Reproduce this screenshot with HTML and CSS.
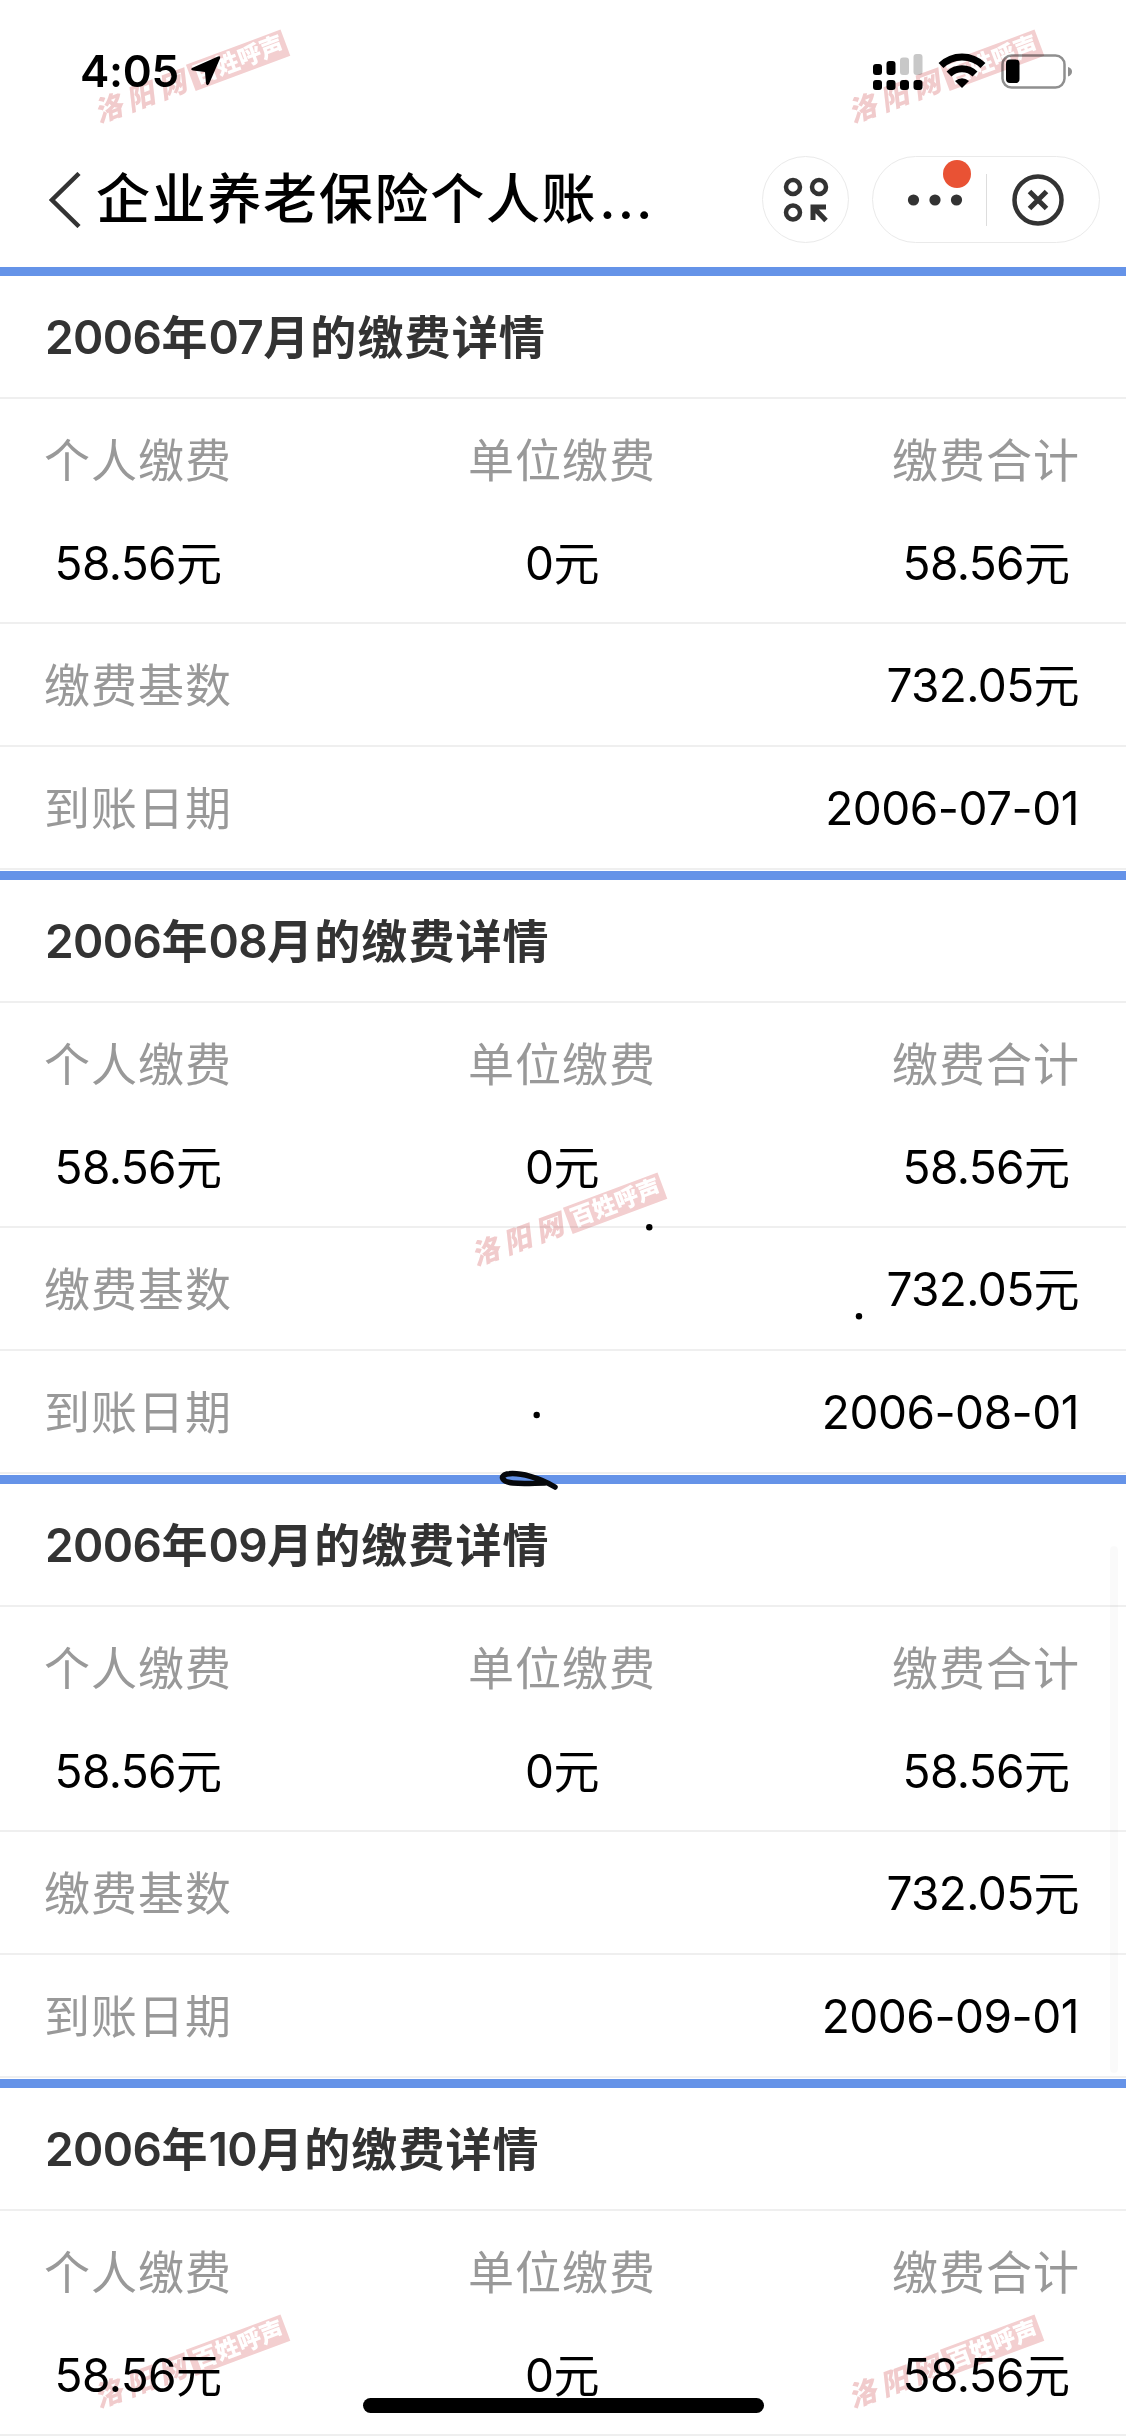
FILE: index.html
```
<!DOCTYPE html>
<html lang="zh-CN">
<head>
    <meta charset="UTF-8">
    <meta name="viewport" content="width=device-width, initial-scale=1.0">
    <link rel="stylesheet" href="styles.css">
    <title>企业养老保险个人账户</title>
</head>
<body>
    <div class="status-bar">
        <span class="time">4:05</span>
        <svg class="location" width="32" height="32" viewBox="0 0 32 32">
            <path d="M2 13 L28 1.500 Q31 0.500 30 3.500 L19 29 Q17 31.500 16 28.500 L15 17 L3 15.500 Q0 14.500 2 13 Z"/>
        </svg>
        <div class="status-icons">
            <svg width="50" height="38" viewBox="0 0 50 38">
                <rect x="0" y="11" width="9" height="11" rx="3"/>
                <rect x="13.500" y="8" width="9" height="14" rx="3"/>
                <rect x="27" y="4.500" width="9" height="17.500" rx="3" fill="#c8c8c8"/>
                <rect x="40.500" y="1" width="9" height="21" rx="3" fill="#c8c8c8"/>
                <rect x="0" y="27" width="9" height="10" rx="3"/>
                <rect x="13.500" y="27" width="9" height="10" rx="3"/>
                <rect x="27" y="27" width="9" height="10" rx="3"/>
                <rect x="40.500" y="27" width="9" height="10" rx="3"/>
            </svg>
            <svg class="wifi" width="48" height="36" viewBox="0 0 48 36">
                <g fill="none" stroke="#000" stroke-width="7">
                    <path d="M3 12.500 A30 30 0 0 1 45 12.500"/>
                    <path d="M11 21 A18.500 18.500 0 0 1 37 21"/>
                </g>
                <path d="M24 35 L17 28 Q24 22.500 31 28 Z"/>
            </svg>
            <svg class="battery" width="72" height="36" viewBox="0 0 72 36">
                <rect x="1.500" y="1.500" width="62" height="32" rx="9" fill="none" stroke="#8f8f8f" stroke-width="2.500"/>
                <rect x="5" y="5.500" width="13.500" height="23.500" rx="4"/>
                <path d="M67 13 Q71 14 71 17.500 Q71 21 67 22.500 Z" fill="#8f8f8f"/>
            </svg>
        </div>
    </div>

    <header>
        <svg class="back" width="32" height="56" viewBox="0 0 32 56">
            <path d="M30 1.500 L3 28 L30 54.500" fill="none" stroke="#333" stroke-width="4.500"/>
        </svg>
        <h1>企业养老保险个人账<span class="dots">...</span></h1>
        <div class="round-btn">
            <svg width="46" height="46" viewBox="0 0 46 46">
                <g fill="none" stroke="#333" stroke-width="4.500">
                    <circle cx="10" cy="10" r="7"/>
                    <circle cx="36" cy="10" r="7"/>
                    <circle cx="10" cy="35.500" r="7"/>
                    <path d="M30 43 V30 H43 M30 30 L43 43.500" stroke-width="5"/>
                </g>
            </svg>
        </div>
        <div class="capsule">
            <div class="more">
                <svg width="56" height="12" viewBox="0 0 56 12" fill="#333">
                    <circle cx="6.500" cy="6" r="5.600"/>
                    <circle cx="28" cy="6" r="5.600"/>
                    <circle cx="49.500" cy="6" r="5.600"/>
                </svg>
                <i class="badge"></i>
            </div>
            <div class="close">
                <svg width="52" height="52" viewBox="0 0 52 52" fill="none" stroke="#333">
                    <circle cx="26" cy="26" r="23.500" stroke-width="4.500"/>
                    <path d="M17.500 17.500 L34.500 34.500 M34.500 17.500 L17.500 34.500" stroke-width="5"/>
                </svg>
            </div>
        </div>
    </header>

    <main>
        <section class="month">
            <h2><span>2006</span>年<span>07</span>月的缴费详情</h2>
            <div class="amounts">
                <div><label>个人缴费</label><p>58.56元</p></div>
                <div><label>单位缴费</label><p>0元</p></div>
                <div><label>缴费合计</label><p>58.56元</p></div>
            </div>
            <div class="row"><label>缴费基数</label><p>732.05元</p></div>
            <div class="row"><label>到账日期</label><p class="date">2006-07-01</p></div>
        </section>
        <section class="month">
            <h2><span>2006</span>年<span>08</span>月的缴费详情</h2>
            <div class="amounts">
                <div><label>个人缴费</label><p>58.56元</p></div>
                <div><label>单位缴费</label><p>0元</p></div>
                <div><label>缴费合计</label><p>58.56元</p></div>
            </div>
            <div class="row"><label>缴费基数</label><p>732.05元</p></div>
            <div class="row"><label>到账日期</label><p class="date">2006-08-01</p></div>
        </section>
        <section class="month">
            <h2><span>2006</span>年<span>09</span>月的缴费详情</h2>
            <div class="amounts">
                <div><label>个人缴费</label><p>58.56元</p></div>
                <div><label>单位缴费</label><p>0元</p></div>
                <div><label>缴费合计</label><p>58.56元</p></div>
            </div>
            <div class="row"><label>缴费基数</label><p>732.05元</p></div>
            <div class="row"><label>到账日期</label><p class="date">2006-09-01</p></div>
        </section>
        <section class="month last">
            <h2><span>2006</span>年<span>10</span>月的缴费详情</h2>
            <div class="amounts">
                <div><label>个人缴费</label><p>58.56元</p></div>
                <div><label>单位缴费</label><p>0元</p></div>
                <div><label>缴费合计</label><p>58.56元</p></div>
            </div>
        </section>
    </main>

    <div class="scrollbar"></div>

    <!-- pen marks -->
    <svg class="marks" width="380" height="280" viewBox="490 1215 380 280">
        <circle cx="649.300" cy="1227.300" r="3.200"/>
        <circle cx="859" cy="1316.300" r="3.200"/>
        <circle cx="536.700" cy="1415" r="3.200"/>
        <path d="M555 1487 C540 1478 520 1472 507 1474 C499 1476 502 1482 513 1483 C524 1484 535 1483 545 1483" fill="none" stroke="#06080c" stroke-width="5.500" stroke-linecap="round"/>
    </svg>

    <div class="watermark wm-tl"><span>洛阳网</span><b>百姓呼声</b></div>
    <div class="watermark wm-tr"><span>洛阳网</span><b>百姓呼声</b></div>
    <div class="watermark wm-mid"><span>洛阳网</span><b>百姓呼声</b></div>
    <div class="watermark wm-bl"><span>洛阳网</span><b>百姓呼声</b></div>
    <div class="watermark wm-br"><span>洛阳网</span><b>百姓呼声</b></div>

    <div class="home-indicator"></div>
</body>
</html>
```
FILE: styles.css
```
* {
    box-sizing: border-box;
    margin: 0;
    padding: 0;
}

body {
    position: relative;
    width: 1126px;
    height: 2436px;
    overflow: hidden;
    background-color: #fff;
    color: #000;
    font-family: Inter, "Noto Sans CJK SC", sans-serif;
    font-size: 46px;
}

svg {
    display: block;
    flex: none;
}

.status-bar {
    display: flex;
    height: 132px;
    padding: 53px 53px 0 80px;
}

.time {
    width: 110px;
    font-size: 44px;
    font-weight: 600;
    letter-spacing: -0.3px;
    line-height: 37px;
}

.location {
    margin-top: 2px;
}

.status-icons {
    display: flex;
    margin-left: auto;
}

.wifi {
    margin-left: 15px;
}

.battery {
    margin: 1px 0 0 15px;
}

header {
    display: flex;
    align-items: center;
    height: 135px;
    padding: 0 26px 0 49px;
}

h1 {
    margin-left: 15px;
    font-size: 54px;
    font-weight: 500;
    letter-spacing: 1.7px;
    line-height: 80px;
    white-space: nowrap;
}

.dots {
    margin-left: 2px;
    letter-spacing: 2px;
}

.round-btn {
    display: flex;
    align-items: center;
    justify-content: center;
    width: 87px;
    height: 87px;
    margin-left: auto;
    border: 1px solid #eaeaea;
    border-radius: 50%;
}

.capsule {
    display: flex;
    align-items: center;
    width: 228px;
    height: 87px;
    margin-left: 23px;
    border: 1px solid #eaeaea;
    border-radius: 44px;
}

.more {
    position: relative;
    display: flex;
    align-items: center;
    width: 114px;
    height: 52px;
    padding-left: 34px;
    border-right: 1.5px solid #ddd;
}

.badge {
    position: absolute;
    left: 70px;
    top: -14px;
    width: 28px;
    height: 28px;
    border-radius: 50%;
    background-color: #e95234;
}

.close {
    margin-left: 25px;
}

.month {
    height: 604px;
    border-top: 9px solid #6593e8;
}

.month.last {
    height: auto;
}

h2 {
    height: 123px;
    padding-left: 45px;
    border-bottom: 2px solid #efefef;
    color: #333;
    font-size: 46px;
    font-weight: 600;
    letter-spacing: 1.1px;
    line-height: 122px;
}

h2 span {
    letter-spacing: -0.6px;
}

label {
    display: block;
    color: #999;
    font-weight: 400;
    letter-spacing: 1px;
}

.amounts {
    display: flex;
    justify-content: space-between;
    height: 225px;
    padding: 26px 46px 0 44px;
    border-bottom: 2px solid #efefef;
    line-height: 70px;
    text-align: center;
}

p {
    letter-spacing: -0.6px;
}

.date {
    letter-spacing: -0.5px;
}

.amounts p {
    margin-top: 33px;
}

.row {
    display: flex;
    justify-content: space-between;
    height: 123px;
    padding: 0 47px 0 44px;
    border-bottom: 2px solid #efefef;
    line-height: 123px;
}

.scrollbar {
    position: absolute;
    left: 1110px;
    top: 1546px;
    width: 8px;
    height: 527px;
    border-radius: 4px;
    background-color: rgba(0, 0, 0, 0.02);
}

/* forum watermark, tiled over the page */
.watermark {
    position: absolute;
    display: flex;
    align-items: center;
    width: 208px;
    height: 28px;
    color: #f1cbcc;
    font-size: 28px;
    font-weight: 900;
    line-height: 28px;
    letter-spacing: 6px;
    white-space: nowrap;
    transform: rotate(-20.5deg);
    mix-blend-mode: multiply;
}

.watermark span {
    width: 107px;
    padding-left: 5px;
    font-style: italic;
}

.watermark b {
    width: 101px;
    padding-left: 4px;
    background-color: #f3cfd0;
    color: #fff;
    font-size: 23.5px;
    letter-spacing: 0;
}

.wm-tl { left: 84px; top: 65px; }
.wm-tr { left: 838px; top: 65px; }
.wm-mid { left: 461px; top: 1208px; }
.wm-bl { left: 84px; top: 2350px; }
.wm-br { left: 838px; top: 2350px; }

.marks {
    position: absolute;
    left: 490px;
    top: 1215px;
}

.home-indicator {
    position: absolute;
    left: 363px;
    top: 2398px;
    width: 401px;
    height: 15px;
    border-radius: 8px;
    background-color: #000;
}
```
